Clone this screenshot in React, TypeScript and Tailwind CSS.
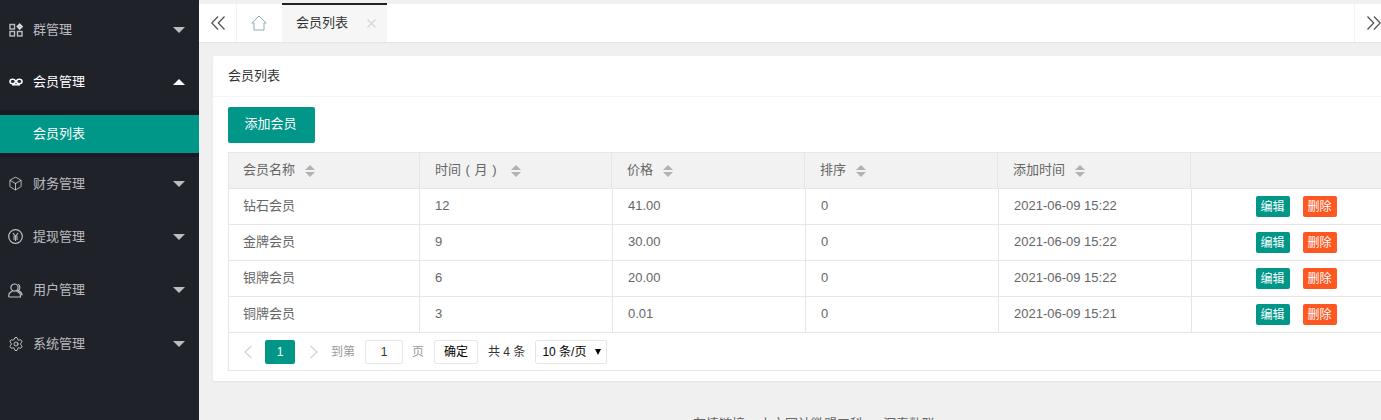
import { Box, Settings } from "lucide-react"
import type { ReactNode } from "react"

const font = "font-['Liberation_Sans','Noto_Sans_CJK_SC',sans-serif]"

const members = [
    { name: "钻石会员", months: "12", price: "41.00", time: "2021-06-09 15:22" },
    { name: "金牌会员", months: "9", price: "30.00", time: "2021-06-09 15:22" },
    { name: "银牌会员", months: "6", price: "20.00", time: "2021-06-09 15:22" },
    { name: "铜牌会员", months: "3", price: "0.01", time: "2021-06-09 15:21" },
]

function GridIcon() {
    return (
        <svg width="14" height="14" viewBox="0 0 14 14" fill="none" stroke="currentColor" strokeWidth="1.4">
            <rect x="1" y="1.500" width="4.500" height="4.500" />
            <rect x="1" y="8.500" width="4.500" height="4.500" />
            <rect x="8.500" y="8.500" width="4.500" height="4.500" />
            <path d="M10.700 1l2.600 2.600-2.600 2.600-2.600-2.600z" fill="currentColor" />
        </svg>
    )
}

function LoopIcon() {
    return (
        <svg width="14" height="14" viewBox="0 0 14 14" fill="none" stroke="currentColor" strokeWidth="1.500">
            <ellipse cx="3.700" cy="6.500" rx="2.700" ry="2.200" />
            <ellipse cx="10.300" cy="6.500" rx="2.700" ry="2.200" />
            <path d="M3 9.800h8" />
        </svg>
    )
}

function YenIcon() {
    return (
        <svg width="15" height="15" viewBox="0 0 15 15" fill="none" stroke="currentColor" strokeWidth="1.200">
            <circle cx="7.500" cy="7.500" r="6.800" />
            <path d="M5 4l2.500 3.500L10 4M7.500 7.500V12M5 8h5M5 10h5" />
        </svg>
    )
}

function UserIcon() {
    return (
        <svg width="15" height="15" viewBox="0 0 15 15" fill="none" stroke="currentColor" strokeWidth="1.200">
            <circle cx="6.500" cy="4.600" r="3.600" />
            <path d="M.8 14v-1.600c0-2 1.800-3.600 3.600-4.100M8.600 8.300c2 .5 3.800 2.100 3.800 4.100V14H.8" />
            <path d="M10 1.300c2.200.7 2.700 4.800.3 6.300 1.700.6 3.500 2 3.900 4.700" />
        </svg>
    )
}

function Triangle({ up }: { up?: boolean }) {
    return up ? (
        <span className="ml-auto mr-[14px] h-0 w-0 border-x-[6px] border-b-[6px] border-x-transparent border-b-white" />
    ) : (
        <span className="ml-auto mr-[14px] h-0 w-0 border-x-[6px] border-t-[6px] border-x-transparent border-t-white/70" />
    )
}

function NavItem({ icon, label, open, height }: { icon: ReactNode; label: string; open?: boolean; height: string }) {
    return (
        <div className={`flex items-center ${height} ${open ? "text-white" : "text-white/70"}`}>
            <span className="flex w-[33px] shrink-0 justify-center pr-[2px]">{icon}</span>
            <span className="text-[13px]">{label}</span>
            <Triangle up={open} />
        </div>
    )
}

function Sidebar() {
    return (
        <aside className="w-[199px] shrink-0 bg-[#20222a] pt-[3px]">
            <NavItem icon={<GridIcon />} label="群管理" height="h-[53px]" />
            <NavItem icon={<LoopIcon />} label="会员管理" open height="h-[54px] pb-[2px]" />
            <div className="bg-[#191a23] pt-[5px] pb-[4px]">
                <div className="flex h-[38px] items-center bg-[#009688] pl-[33px] text-[13px] text-white">会员列表</div>
            </div>
            <NavItem icon={<Box size={15} strokeWidth={1.500} />} label="财务管理" height="h-[53px]" />
            <NavItem icon={<YenIcon />} label="提现管理" height="h-[53px]" />
            <NavItem icon={<UserIcon />} label="用户管理" height="h-[54px]" />
            <NavItem icon={<Settings size={16} strokeWidth={1.500} />} label="系统管理" height="h-[54px]" />
        </aside>
    )
}

function TabBar() {
    return (
        <div className="mt-[3px] flex h-[40px] shrink-0 border-y border-y-[#f0f0f0] border-b-[#e4e4e4] bg-white">
            <div className="flex w-[38px] shrink-0 items-center justify-center border-r border-[#f2f2f2] text-[#555]">
                <svg width="14" height="14" viewBox="0 0 14 14" fill="none" stroke="currentColor" strokeWidth="1.300">
                    <path d="M7 .5L.8 7 7 13.500M13.500.5L7.300 7l6.200 6.500" />
                </svg>
            </div>
            <div className="flex w-[45px] shrink-0 items-center justify-center pr-[2px]">
                <svg width="16" height="16" viewBox="0 0 16 16" fill="none" stroke="#8fa9bb" strokeWidth="1">
                    <path d="M.8 8L8 1l7.200 7H13v7H3V8z" />
                </svg>
            </div>
            <div className="relative flex w-[105px] shrink-0 items-center bg-[#f6f6f6] pl-[14px] text-[13px] text-[#333]">
                <span className="absolute -top-px left-0 h-[2px] w-full bg-[#20222a]" />
                会员列表
                <svg className="ml-[19px]" width="9" height="9" viewBox="0 0 9 9" stroke="#d9d4d0" strokeWidth="1.200">
                    <path d="M.5.5l8 8M8.500.5l-8 8" />
                </svg>
            </div>
            <div className="flex-1" />
            <div className="flex w-[27px] shrink-0 items-center justify-end border-l border-[#f2f2f2] text-[#555]">
                <svg width="14" height="14" viewBox="0 0 14 14" fill="none" stroke="currentColor" strokeWidth="1.300">
                    <path d="M7 .5l6.200 6.500L7 13.500M.5.5L6.700 7 .5 13.500" />
                </svg>
            </div>
        </div>
    )
}

function SortIcon() {
    return (
        <span className="ml-[10px] flex flex-col gap-[2px]">
            <span className="h-0 w-0 border-x-[5px] border-b-[5px] border-x-transparent border-b-[#b2b2b2]" />
            <span className="h-0 w-0 border-x-[5px] border-t-[5px] border-x-transparent border-t-[#b2b2b2]" />
        </span>
    )
}

function HeadCell({ label, width, first }: { label: string; width: string; first?: boolean }) {
    return (
        <div className={`flex shrink-0 items-center border-r border-[#e6e6e6] ${first ? "pl-[14px]" : "pl-[15px]"} ${width}`}>
            <span className="whitespace-pre pb-[2px] [word-spacing:1px]">{label}</span>
            <SortIcon />
        </div>
    )
}

function BodyCell({ children, width, first }: { children: ReactNode; width: string; first?: boolean }) {
    return (
        <div className={`flex shrink-0 items-center border-r border-[#e6e6e6] pb-[2px] ${first ? "pl-[14px]" : "pl-[15px]"} ${width}`}>
            {children}
        </div>
    )
}

function MemberTable() {
    return (
        <div className="mt-[9px] w-[1174px] border-l border-[#e6e6e6] text-[13px] text-[#666]">
            <div className="flex h-[37px] border-y border-[#e6e6e6] bg-[#f2f2f2]">
                <HeadCell label="会员名称" width="w-[191px]" first />
                <HeadCell label="时间 ( 月 ) " width="w-[192px]" />
                <HeadCell label="价格" width="w-[193px]" />
                <HeadCell label="排序" width="w-[193px]" />
                <HeadCell label="添加时间" width="w-[193px]" />
            </div>
            {members.map((m) => (
                <div key={m.name} className="flex h-[36px] border-b border-[#e6e6e6]">
                    <BodyCell width="w-[191px]" first>{m.name}</BodyCell>
                    <BodyCell width="w-[193px]">{m.months}</BodyCell>
                    <BodyCell width="w-[193px]">{m.price}</BodyCell>
                    <BodyCell width="w-[193px]">0</BodyCell>
                    <BodyCell width="w-[193px]">{m.time}</BodyCell>
                    <div className="flex flex-1 items-center justify-center gap-[13px] pr-[2px] text-[12px] text-white">
                        <span className="flex h-[21px] w-[34px] items-center justify-center rounded-[2px] bg-[#009688]">编辑</span>
                        <span className="flex h-[21px] w-[34px] items-center justify-center rounded-[2px] bg-[#ff5722]">删除</span>
                    </div>
                </div>
            ))}
        </div>
    )
}

function Pagination() {
    return (
        <div className="flex h-[38px] w-[1174px] items-center border-x border-b border-[#e6e6e6] pl-[14px] text-[12px] text-[#333]">
            <svg width="10" height="14" viewBox="0 0 10 14" fill="none" stroke="#d2d2d2" strokeWidth="1.300">
                <path d="M8.500 1L2 7l6.500 6" />
            </svg>
            <span className="ml-[12px] flex h-[24px] w-[30px] items-center justify-center rounded-[2px] bg-[#009688] text-white">1</span>
            <svg className="ml-[14px]" width="10" height="14" viewBox="0 0 10 14" fill="none" stroke="#d2d2d2" strokeWidth="1.300">
                <path d="M1.500 1L8 7l-6.500 6" />
            </svg>
            <span className="ml-[12px] text-[#999]">到第</span>
            <span className="ml-[10px] flex h-[24px] w-[38px] items-center justify-center rounded-[2px] border border-[#e6e6e6]">1</span>
            <span className="ml-[9px] text-[#999]">页</span>
            <span className="ml-[10px] flex h-[24px] w-[44px] items-center justify-center rounded-[2px] border border-[#e6e6e6] text-black">确定</span>
            <span className="ml-[10px]">共 4 条</span>
            <span className="ml-[10px] flex h-[24px] w-[72px] items-center rounded-[2px] border border-[#e6e6e6] pl-[6px] text-black">
                10 条/页
                <span className="ml-auto mr-[5px] h-0 w-0 border-x-[3px] border-t-[6px] border-x-transparent border-t-black" />
            </span>
        </div>
    )
}

export default function App() {
    return (
        <div className={`${font} flex h-[420px] w-[1381px] overflow-hidden bg-[#f0f0f0]`}>
            <Sidebar />
            <div className="flex min-w-0 flex-1 flex-col overflow-hidden bg-[#f0f0f0]">
                <div className="h-[3px] bg-white" />
                <TabBar />
                <div className="ml-[14px] mt-[13px] w-[1204px] shrink-0 rounded-[2px] bg-white pb-[10px] shadow-[0_1px_2px_rgba(0,0,0,0.05)]">
                    <div className="flex h-[41px] items-center border-b border-[#f6f6f6] pl-[15px] text-[13px] text-[#333]">会员列表</div>
                    <div className="pl-[15px] pt-[10px]">
                        <div className="flex h-[36px] w-[87px] items-center justify-center rounded-[2px] bg-[#009688] pr-[2px] pb-[2px] text-[13px] text-white">添加会员</div>
                        <MemberTable />
                        <Pagination />
                    </div>
                </div>
                <div className="ml-[494px] mt-[33px] flex gap-[14px] text-[13px] leading-[20px] text-[#666]">
                    <span>友情链接</span>
                    <span>中文网计微盟工科</span>
                    <span className="ml-[6px]">沉泰数联</span>
                </div>
            </div>
        </div>
    )
}
